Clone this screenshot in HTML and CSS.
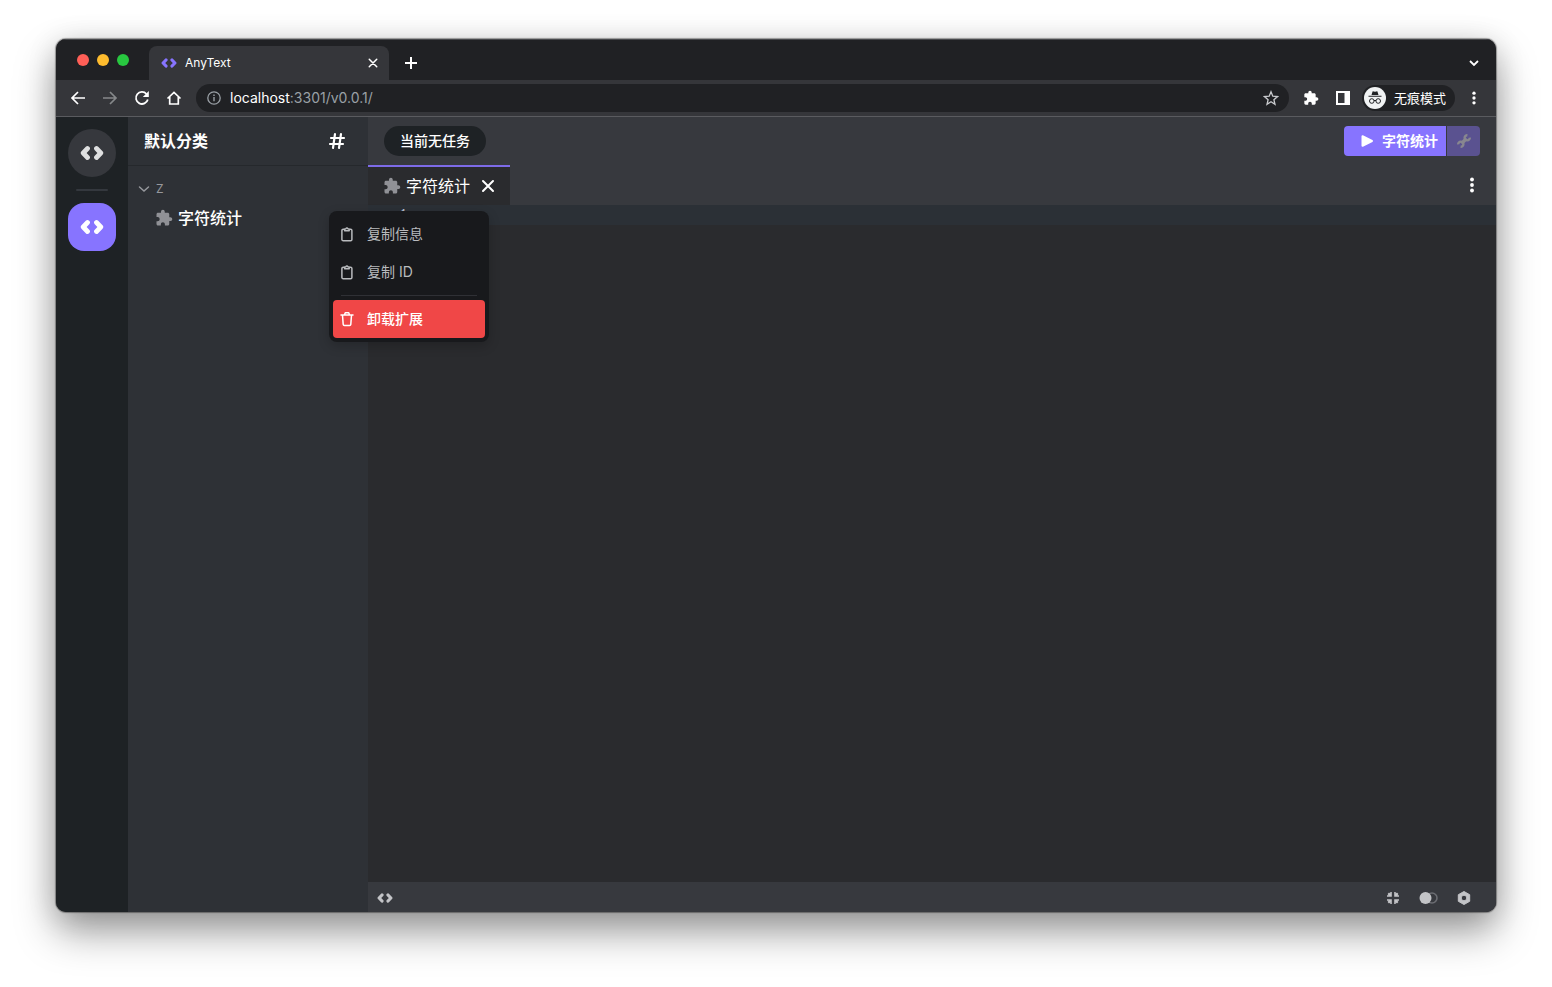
FILE: index.html
```html
<!DOCTYPE html>
<html lang="zh-CN">
<head>
<meta charset="utf-8">
<title>AnyText</title>
<link rel="stylesheet" href="styles.css">
</head>
<body>
<svg class="defs" aria-hidden="true">
  <symbol id="code" viewBox="0 0 24 16"><path d="M7.500 3.500 3.200 8l4.300 4.500M16.500 3.500 20.800 8l-4.300 4.500" fill="none" stroke="currentColor" stroke-width="4.800" stroke-linecap="round" stroke-linejoin="round"/></symbol>
  <symbol id="puzzle" viewBox="0 0 24 24"><path fill="currentColor" d="M20.500 11H19V7c0-1.100-.9-2-2-2h-4V3.500C13 2.120 11.880 1 10.500 1S8 2.120 8 3.500V5H4c-1.100 0-2 .9-2 2v3.800h1.500c1.500 0 2.700 1.200 2.700 2.700S5 16.200 3.500 16.200H2V20c0 1.100.9 2 2 2h3.800v-1.500c0-1.500 1.200-2.700 2.700-2.700s2.700 1.200 2.700 2.700V22H17c1.100 0 2-.9 2-2v-4h1.500c1.380 0 2.500-1.120 2.500-2.500S21.880 11 20.500 11z"/></symbol>
  <symbol id="clip" viewBox="0 0 16 16"><g fill="none" stroke="currentColor" stroke-width="1.500" stroke-linejoin="round"><path d="M5.500 3.200H4.200A1.300 1.300 0 0 0 2.900 4.500v8.900a1.300 1.300 0 0 0 1.300 1.300h7.400a1.300 1.300 0 0 0 1.300-1.300V4.500a1.300 1.300 0 0 0-1.300-1.300h-1.300"/><path d="M5.600 4.800V3.200L6.900 2.700a1.100 1.100 0 0 1 2 0l1.300.5v1.600z"/></g></symbol>
  <symbol id="dots" viewBox="0 0 16 16"><g fill="currentColor"><circle cx="8" cy="2.500" r="1.900"/><circle cx="8" cy="8" r="1.900"/><circle cx="8" cy="13.500" r="1.900"/></g></symbol>
  <symbol id="cross" viewBox="0 0 16 16"><path d="M3 3l10 10M13 3 3 13" fill="none" stroke="currentColor" stroke-width="2" stroke-linecap="round"/></symbol>
</svg>

<div class="window">
  <header class="tabstrip">
    <div class="lights"><i class="light red"></i><i class="light amber"></i><i class="light green"></i></div>
    <div class="browser-tab">
      <svg class="i16 accent"><use href="#code"/></svg>
      <span class="tab-title">AnyText</span>
      <button class="icon-btn" aria-label="关闭标签页"><svg class="i12"><use href="#cross"/></svg></button>
    </div>
    <button class="icon-btn new-tab" aria-label="新标签页"><svg class="i16" viewBox="0 0 16 16"><path d="M8 2v12M2 8h12" stroke="currentColor" stroke-width="2"/></svg></button>
    <button class="icon-btn tab-list" aria-label="标签页列表"><svg class="i12" viewBox="0 0 12 12"><path d="M2 4l4 4 4-4" fill="none" stroke="currentColor" stroke-width="1.800"/></svg></button>
  </header>

  <div class="toolbar">
    <nav class="nav">
      <button class="icon-btn" aria-label="后退"><svg class="i16" viewBox="0 0 16 16"><path d="M15 8H2.500M8 2 2 8l6 6" fill="none" stroke="currentColor" stroke-width="1.700"/></svg></button>
      <button class="icon-btn dim" aria-label="前进"><svg class="i16" viewBox="0 0 16 16"><path d="M1 8h12.500M8 2l6 6-6 6" fill="none" stroke="currentColor" stroke-width="1.700"/></svg></button>
      <button class="icon-btn" aria-label="刷新"><svg class="i16" viewBox="0 0 16 16"><path d="M13.800 9.500A6 6 0 1 1 12.500 4" fill="none" stroke="currentColor" stroke-width="1.800"/><path d="M14.800 1v6h-6z" fill="currentColor"/></svg></button>
      <button class="icon-btn" aria-label="主页"><svg class="i16" viewBox="0 0 16 16"><path d="M1.500 8.500 8 2.300l6.500 6.200M3.700 7v7h8.600V7" fill="none" stroke="currentColor" stroke-width="1.700"/></svg></button>
    </nav>
    <div class="address">
      <svg class="i14 muted" viewBox="0 0 14 14"><circle cx="7" cy="7" r="6.200" fill="none" stroke="currentColor" stroke-width="1.300"/><path d="M7 6v4.200M7 3.500v1.500" stroke="currentColor" stroke-width="1.400"/></svg>
      <span class="url"><b>localhost</b>:3301/v0.0.1/</span>
      <button class="icon-btn star" aria-label="收藏"><svg class="i16" viewBox="0 0 16 16"><path d="M8 1.800l1.800 4.400 4.700.4-3.600 3.100 1.100 4.600L8 11.800l-4 2.500 1.100-4.600L1.500 6.600l4.700-.4z" fill="none" stroke="currentColor" stroke-width="1.300"/></svg></button>
    </div>
    <div class="tools">
      <button class="icon-btn" aria-label="扩展程序"><svg class="i16"><use href="#puzzle"/></svg></button>
      <button class="icon-btn" aria-label="侧边栏"><svg class="i16" viewBox="0 0 16 16"><path d="M1 1h14v14H1zM3 3v10h6.500V3z" fill="currentColor" fill-rule="evenodd"/></svg></button>
      <button class="profile">
        <svg class="avatar" viewBox="0 0 22 22"><circle cx="11" cy="11" r="11" fill="#f1f3f4"/><g fill="#202124"><path d="M7.500 8l1-3.200c.2-.5.600-.6 1-.4l1.500.4 1.500-.4c.4-.2.800-.1 1 .4l1 3.200z"/><path d="M4.500 8.700h13v1h-13z"/></g><g fill="none" stroke="#202124"><circle cx="7.800" cy="14" r="2.300"/><circle cx="14.200" cy="14" r="2.300"/><path d="M10 13.700q1-.7 2 0"/></g></svg>
        <span>无痕模式</span>
      </button>
      <button class="icon-btn" aria-label="菜单"><svg class="i14"><use href="#dots"/></svg></button>
    </div>
  </div>

  <div class="app">
    <nav class="rail">
      <button class="rail-btn round" aria-label="主页"><svg class="i24"><use href="#code"/></svg></button>
      <hr class="rail-line">
      <button class="rail-btn active" aria-label="默认分类"><svg class="i24"><use href="#code"/></svg></button>
    </nav>

    <aside class="sidebar">
      <div class="side-head">
        <h1>默认分类</h1>
        <button class="icon-btn" aria-label="标签"><svg class="i18" viewBox="0 0 18 18"><path d="M7 2 5 16M13 2l-2 14M3 6h13M2 12h13" fill="none" stroke="currentColor" stroke-width="2.200" stroke-linecap="round"/></svg></button>
      </div>
      <div class="group"><svg class="i12" viewBox="0 0 12 12"><path d="M1.500 4 6 8l4.500-4" fill="none" stroke="currentColor" stroke-width="1.500" stroke-linecap="round"/></svg><span>Z</span></div>
      <button class="entry"><svg class="i18 grey"><use href="#puzzle"/></svg><span>字符统计</span></button>
    </aside>

    <main class="main">
      <div class="main-head">
        <span class="task">当前无任务</span>
        <div class="run-group">
          <button class="run"><svg class="i14" viewBox="0 0 14 14"><path d="M2.500 2.200v9.600L12 7z" fill="currentColor" stroke="currentColor" stroke-width="2" stroke-linejoin="round"/></svg><span>字符统计</span></button>
          <button class="wrench" aria-label="设置"><svg class="i16" viewBox="0 0 16 16"><g fill="none" stroke="currentColor"><path d="M11.400 2.200a2.600 2.600 0 1 0 2.400 2.400M4.600 13.800a2.600 2.600 0 1 0-2.400-2.400" stroke-width="2.400"/><path d="M10.500 5.500l-5 5" stroke-width="3.400"/></g></svg></button>
        </div>
      </div>
      <div class="tabs">
        <div class="tab"><svg class="i18 grey"><use href="#puzzle"/></svg><span>字符统计</span><button class="icon-btn" aria-label="关闭"><svg class="i16"><use href="#cross"/></svg></button></div>
        <button class="icon-btn more" aria-label="更多"><svg class="i16"><use href="#dots"/></svg></button>
      </div>
      <div class="editor"><div class="line"><span>1</span></div></div>
      <footer class="status">
        <button class="icon-btn" aria-label="代码"><svg class="i16"><use href="#code"/></svg></button>
        <div class="status-right">
          <button class="icon-btn" aria-label="收起"><svg class="i14" viewBox="0 0 14 14"><g fill="currentColor"><path id="arm" d="M5.800 1v4.800H1V4.300l1.500-.1-.9-1.200L3 1.600l1.200.9.100-1.500z"/><use href="#arm" transform="rotate(90 7 7)"/><use href="#arm" transform="rotate(180 7 7)"/><use href="#arm" transform="rotate(270 7 7)"/></g></svg></button>
          <button class="icon-btn" aria-label="切换主题"><svg class="toggle" viewBox="0 0 20 14"><circle cx="14" cy="7" r="5" fill="none" stroke="#6b6d72" stroke-width="1.600"/><circle cx="7.500" cy="7" r="6" fill="currentColor"/></svg></button>
          <button class="icon-btn" aria-label="设置"><svg class="i16" viewBox="0 0 16 16"><path d="M8 1.500 13.700 4.700v6.600L8 14.500l-5.700-3.200V4.700zM8 5.200a2.800 2.800 0 1 0 0 5.600 2.800 2.800 0 0 0 0-5.600z" fill="currentColor" stroke="currentColor" stroke-linejoin="round" fill-rule="evenodd"/></svg></button>
        </div>
      </footer>
    </main>

    <div class="menu" role="menu">
      <button class="menu-item" role="menuitem"><svg class="i16"><use href="#clip"/></svg><span>复制信息</span></button>
      <button class="menu-item" role="menuitem"><svg class="i16"><use href="#clip"/></svg><span>复制 ID</span></button>
      <hr class="menu-line">
      <button class="menu-item danger" role="menuitem"><svg class="i16" viewBox="0 0 16 16"><path d="M2 4h12M5.500 3.800 6.300 1.700h3.400l.8 2.100M3.500 4.200l.7 9.200q.1 1.100 1.200 1.100h5.200q1.100 0 1.200-1.100l.7-9.200" fill="none" stroke="currentColor" stroke-width="1.500" stroke-linecap="round" stroke-linejoin="round"/></svg><span>卸载扩展</span></button>
    </div>
  </div>
</div>
</body>
</html>
```

FILE: styles.css
```css
* { box-sizing: border-box; }
body {
  margin: 0;
  height: 100vh;
  padding: 39px 56px 75px;
  background: #fff;
  color: #fff;
  font: 14px/20px Inter, "Noto Sans CJK SC", sans-serif;
  overflow: hidden;
}
button { border: 0; margin: 0; padding: 0; background: none; color: inherit; font: inherit; }
svg { display: block; flex: none; }
.defs { position: absolute; width: 0; height: 0; }
.i12 { width: 12px; height: 12px; }
.i14 { width: 14px; height: 14px; }
.i16 { width: 16px; height: 16px; }
.i18 { width: 18px; height: 18px; }
.i24 { width: 24px; height: 16px; }
.accent { color: #8774ff; }
.grey { color: #909196; }
.muted { color: #9aa0a6; }
.icon-btn { display: flex; align-items: center; justify-content: center; }

.window {
  display: flex;
  flex-direction: column;
  height: 100%;
  border-radius: 10px;
  overflow: hidden;
  background: #35363a;
  box-shadow: 0 0 1px 1px rgba(0, 0, 0, .35), 0 20px 40px rgba(0, 0, 0, .38), 0 4px 30px rgba(0, 0, 0, .14);
}

.tabstrip {
  display: flex;
  height: 41px;
  padding: 7px 16px 0 21px;
  background: #202124;
  box-shadow: inset 0 1px 0 #47484b;
}
.lights { display: flex; gap: 8px; width: 72px; padding-top: 8px; }
.light { width: 12px; height: 12px; border-radius: 50%; }
.red { background: #ff5f57; }
.amber { background: #febc2e; }
.green { background: #28c840; }
.browser-tab {
  display: flex;
  align-items: center;
  gap: 8px;
  width: 240px;
  padding: 0 10px 0 12px;
  border-radius: 8px 8px 0 0;
  background: #35363a;
}
.tab-title { flex: 1; font-size: 12px; }
.new-tab { width: 44px; }
.tab-list { margin-left: auto; }

.toolbar {
  display: flex;
  align-items: center;
  height: 37px;
  padding: 0 15px 0 14px;
  border-bottom: 1px solid #5a5b5f;
  background: #35363a;
}
.nav { display: flex; gap: 16px; width: 126px; }
.dim { color: #86888a; }
.address {
  display: flex;
  flex: 1;
  align-items: center;
  gap: 9px;
  height: 28px;
  padding: 0 10px 0 11px;
  border-radius: 14px;
  background: #202124;
}
.url { flex: 1; color: #9aa0a6; }
.url b { color: #fff; font-weight: 400; }
.star { color: #c8cacd; }
.tools { display: flex; align-items: center; gap: 16px; padding-left: 14px; }
.profile {
  display: flex;
  align-items: center;
  gap: 8px;
  height: 26px;
  margin: 0 -4px 0 -5px;
  padding: 0 9px 0 2px;
  border-radius: 13px;
  background: #202124;
  font-size: 13px;
}
.avatar { width: 22px; height: 22px; }

.app { position: relative; display: flex; flex: 1; min-height: 0; }
.rail {
  display: flex;
  flex-direction: column;
  align-items: center;
  gap: 12px;
  width: 72px;
  padding-top: 12px;
  background: #1e2225;
}
.rail-btn {
  display: flex;
  align-items: center;
  justify-content: center;
  width: 48px;
  height: 48px;
  border-radius: 16px;
}
.round { border-radius: 50%; background: #36383d; color: #dfe0e1; }
.active { background: #8774ff; }
.rail-line { width: 32px; height: 2px; margin: 0; border: 0; border-radius: 1px; background: #34383e; }

.sidebar { width: 240px; background: #2e3136; }
.side-head {
  display: flex;
  align-items: center;
  justify-content: space-between;
  height: 49px;
  padding: 0 22px 0 16px;
  border-bottom: 1px solid #25282c;
}
.side-head h1 { margin: 0; font-size: 16px; font-weight: 700; line-height: 24px; }
.group {
  display: flex;
  align-items: center;
  gap: 6px;
  padding: 13px 10px 4px;
  color: #96989d;
  font-size: 12px;
}
.entry { display: flex; align-items: center; gap: 5px; padding: 3px 27px; font-size: 16px; font-weight: 500; line-height: 24px; }

.main { display: flex; flex: 1; flex-direction: column; min-width: 0; background: #2a2b2e; }
.main-head {
  display: flex;
  align-items: center;
  justify-content: space-between;
  height: 48px;
  padding: 0 16px;
  background: #37393e;
}
.task { padding: 5px 16px; border-radius: 15px; background: #1e2225; font-weight: 500; }
.run-group { display: flex; gap: 1px; height: 30px; }
.run {
  display: flex;
  align-items: center;
  gap: 8px;
  padding: 0 8px 0 16px;
  border-radius: 4px 0 0 4px;
  background: #8774ff;
  font-weight: 700;
}
.wrench {
  display: flex;
  align-items: center;
  justify-content: center;
  width: 33px;
  border-radius: 0 4px 4px 0;
  background: #5a5290;
  color: #88878f;
}
.tabs { display: flex; justify-content: space-between; height: 40px; background: #37393e; }
.tab {
  display: flex;
  align-items: center;
  gap: 5px;
  padding: 0 14px 0 15px;
  border-top: 2px solid #7d6be8;
  background: #2a2b2e;
  font-size: 16px;
}
.tab .icon-btn { margin-left: 5px; }
.more { padding: 0 16px; }
.editor { flex: 1; }
.line { height: 20px; padding-left: 31px; background: #2b3036; color: #b5bdd0; font: 14px/20px "Liberation Mono", monospace; }
.status {
  display: flex;
  align-items: center;
  justify-content: space-between;
  height: 30px;
  padding: 1px 24px 0 9px;
  background: #37393e;
  color: #c3c4c7;
}
.status-right { display: flex; align-items: center; gap: 18px; }
.toggle { width: 20px; height: 14px; }

.menu {
  position: absolute;
  top: 94px;
  left: 273px;
  width: 160px;
  padding: 4px;
  border-radius: 8px;
  background: #18191c;
  box-shadow: 0 4px 12px rgba(0, 0, 0, .2);
}
.menu-item {
  display: flex;
  align-items: center;
  gap: 12px;
  width: 100%;
  height: 38px;
  padding: 0 9px 0 6px;
  border-radius: 4px;
  color: #b9bbbe;
}
.menu-line { height: 1px; margin: 4px 8px; border: 0; background: #2f3035; }
.danger { background: #f04747; color: #fff; font-weight: 500; }
```
